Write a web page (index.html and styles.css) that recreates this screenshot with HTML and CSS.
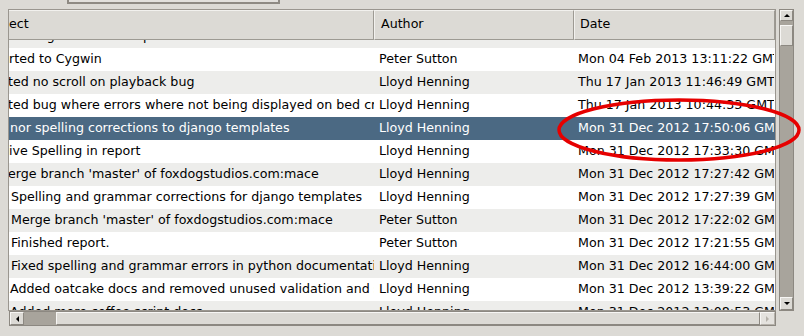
FILE: index.html
```html
<!DOCTYPE html>
<html lang="en">
<head>
    <meta charset="utf-8">
    <title>History</title>
    <link rel="stylesheet" href="styles.css">
</head>
<body>
    <div class="toolbar">
        <div class="tool-btn"></div>
    </div>
    <div class="scrolled">
        <div class="frame">
            <div class="head">
                <div class="col col-subject">ect</div>
                <div class="col col-author">Author</div>
                <div class="col col-date">Date</div>
            </div>
            <div class="rows">
                <div class="list">
                    <div class="row">
                        <div class="cell subject ind-0">Moving to a newer repo</div>
                        <div class="cell author">Peter Sutton</div>
                        <div class="cell date">Mon 04 Feb 2013 13:15:40 GMT</div>
                    </div>
                    <div class="row">
                        <div class="cell subject ind-0">rted to Cygwin</div>
                        <div class="cell author">Peter Sutton</div>
                        <div class="cell date">Mon 04 Feb 2013 13:11:22 GMT</div>
                    </div>
                    <div class="row">
                        <div class="cell subject ind-m1">ted no scroll on playback bug</div>
                        <div class="cell author">Lloyd Henning</div>
                        <div class="cell date">Thu 17 Jan 2013 11:46:49 GMT</div>
                    </div>
                    <div class="row">
                        <div class="cell subject ind-m1">ted bug where errors where not being displayed on bed creation</div>
                        <div class="cell author">Lloyd Henning</div>
                        <div class="cell date">Thu 17 Jan 2013 10:44:33 GMT</div>
                    </div>
                    <div class="row selected">
                        <div class="cell subject ind-1">nor spelling corrections to django templates</div>
                        <div class="cell author">Lloyd Henning</div>
                        <div class="cell date">Mon 31 Dec 2012 17:50:06 GMT</div>
                    </div>
                    <div class="row">
                        <div class="cell subject ind-0">ive Spelling in report</div>
                        <div class="cell author">Lloyd Henning</div>
                        <div class="cell date">Mon 31 Dec 2012 17:33:30 GMT</div>
                    </div>
                    <div class="row">
                        <div class="cell subject ind-m1">erge branch 'master' of foxdogstudios.com:mace</div>
                        <div class="cell author">Lloyd Henning</div>
                        <div class="cell date">Mon 31 Dec 2012 17:27:42 GMT</div>
                    </div>
                    <div class="row">
                        <div class="cell subject ind-2">Spelling and grammar corrections for django templates</div>
                        <div class="cell author">Lloyd Henning</div>
                        <div class="cell date">Mon 31 Dec 2012 17:27:39 GMT</div>
                    </div>
                    <div class="row">
                        <div class="cell subject ind-2">Merge branch 'master' of foxdogstudios.com:mace</div>
                        <div class="cell author">Peter Sutton</div>
                        <div class="cell date">Mon 31 Dec 2012 17:22:02 GMT</div>
                    </div>
                    <div class="row">
                        <div class="cell subject ind-2">Finished report.</div>
                        <div class="cell author">Peter Sutton</div>
                        <div class="cell date">Mon 31 Dec 2012 17:21:55 GMT</div>
                    </div>
                    <div class="row">
                        <div class="cell subject ind-2">Fixed spelling and grammar errors in python documentation</div>
                        <div class="cell author">Lloyd Henning</div>
                        <div class="cell date">Mon 31 Dec 2012 16:44:00 GMT</div>
                    </div>
                    <div class="row">
                        <div class="cell subject ind-1">Added oatcake docs and removed unused validation and settings</div>
                        <div class="cell author">Lloyd Henning</div>
                        <div class="cell date">Mon 31 Dec 2012 13:39:22 GMT</div>
                    </div>
                    <div class="row">
                        <div class="cell subject ind-1">Added more coffee script docs</div>
                        <div class="cell author">Lloyd Henning</div>
                        <div class="cell date">Mon 31 Dec 2012 13:08:53 GMT</div>
                    </div>
                </div>
            </div>
        </div>
        <div class="vscroll">
            <div class="sb-btn v-up"><span class="arrow arrow-up"></span></div>
            <div class="sb-thumb v-thumb"></div>
            <div class="sb-fill"></div>
            <div class="sb-btn v-down"><span class="arrow arrow-down"></span></div>
        </div>
        <div class="hscroll">
            <div class="sb-btn h-left"><span class="arrow arrow-left"></span></div>
            <div class="sb-thumb h-thumb"></div>
            <div class="sb-btn h-right disabled"><span class="arrow arrow-right"></span></div>
        </div>
    </div>

    <!-- red mark drawn over the screenshot -->
    <svg class="annotation" width="804" height="336" viewBox="0 0 804 336">
        <ellipse cx="679" cy="130" rx="120" ry="30" fill="none" stroke="#e60000" stroke-width="3.5"/>
    </svg>
</body>
</html>
```

FILE: styles.css
```css
* {
    box-sizing: border-box;
}

body {
    margin: 0;
    width: 804px;
    height: 336px;
    overflow: hidden;
    position: relative;
    background-color: #dcdad5;
    font-family: "DejaVu Sans", sans-serif;
    font-size: 12.65px;
    color: #000;
}

.toolbar {
    height: 9px;
}

.tool-btn {
    margin-left: 67px;
    width: 213px;
    height: 4px;
    background-color: #e2e0dc;
    border: 2px solid #8e8a83;
    border-top: none;
}

.scrolled {
    display: grid;
    grid-template-columns: 768px 15px;
    grid-template-rows: 302px 15px;
    column-gap: 3px;
    margin-left: 8px;
}

.frame {
    display: flex;
    flex-direction: column;
    border: 1px solid #9a968f;
    background-color: #fff;
    overflow: hidden;
}

.head {
    display: grid;
    grid-template-columns: 365px 200px 201px;
    height: 30px;
    flex: none;
}

.col {
    background-color: #dcdad5;
    border-top: 1px solid #f2f1ee;
    border-left: 1px solid #f2f1ee;
    border-right: 1px solid #9d9a93;
    border-bottom: 1px solid #9d9a93;
    line-height: 26px;
    padding-left: 5px;
    white-space: nowrap;
    overflow: hidden;
}

.col-subject {
    border-left: none;
    padding-left: 0;
}

.col-author {
    padding-left: 6px;
}

.rows {
    flex: 1;
    overflow: hidden;
}

/* list is scrolled down a little */
.list {
    margin-top: -15px;
}

.row {
    display: grid;
    grid-template-columns: 365px 200px 200px;
    height: 23px;
    line-height: 21px;
    white-space: nowrap;
}

.row:nth-child(odd) {
    background-color: #ededeb;
}

.row.selected {
    background-color: #4b6983;
    color: #fff;
}

.cell {
    overflow: hidden;
}

.subject {
    padding-left: 0;
}

.ind-m1 {
    text-indent: -1px;
}

.ind-1 {
    padding-left: 1px;
}

.ind-2 {
    padding-left: 2px;
}

.author {
    padding-left: 5px;
}

.date {
    padding-left: 4px;
}

/* scrollbars */
.vscroll,
.hscroll {
    display: flex;
    background-color: #a8a49c;
    border: 1px solid #8c8881;
}

.vscroll {
    flex-direction: column;
}

.hscroll {
    margin-left: 1px;
}

.sb-btn,
.sb-thumb {
    background-color: #dcdad5;
    border: 1px solid;
    border-color: #f7f6f4 #8c8881 #8c8881 #f7f6f4;
}

.sb-btn {
    display: flex;
    align-items: center;
    justify-content: center;
}

.sb-fill {
    flex: 1;
}

.v-up {
    height: 11px;
}

.v-thumb {
    margin-top: 4px;
    height: 21px;
}

.v-down {
    height: 13px;
}

.h-left {
    width: 14px;
}

.h-thumb {
    flex: 1;
    margin-left: 32px;
}

.h-right {
    width: 15px;
}

.disabled {
    background-color: #e4e2de;
    border-color: #f7f6f4 #b5b1aa #b5b1aa #f7f6f4;
}

.arrow {
    width: 0;
    height: 0;
}

.arrow-up {
    border-left: 3px solid transparent;
    border-right: 3px solid transparent;
    border-bottom: 3px solid #000;
}

.arrow-down {
    border-left: 3px solid transparent;
    border-right: 3px solid transparent;
    border-top: 3px solid #000;
}

.arrow-left {
    border-top: 3px solid transparent;
    border-bottom: 3px solid transparent;
    border-right: 3px solid #000;
}

.arrow-right {
    border-top: 3px solid transparent;
    border-bottom: 3px solid transparent;
    border-left: 3px solid #b5b1aa;
}

.annotation {
    position: absolute;
    left: 0;
    top: 0;
    pointer-events: none;
}
```
